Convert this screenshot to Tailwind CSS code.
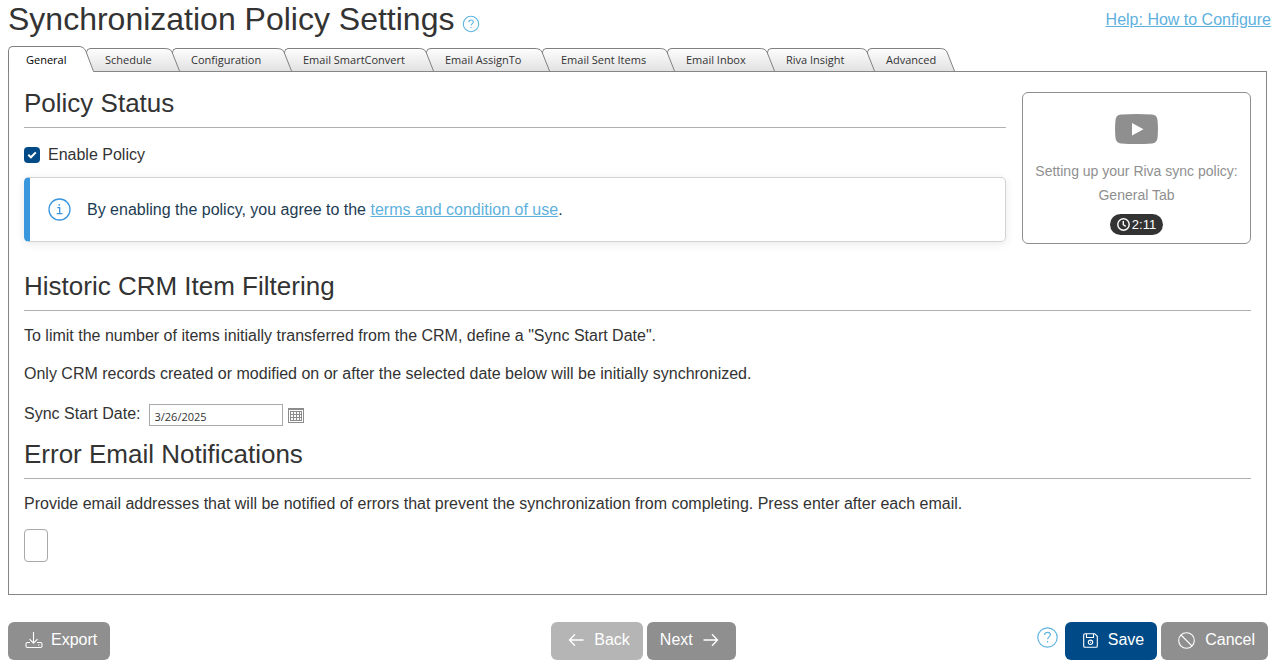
<!DOCTYPE html>
<html lang="en">
<head>
    <meta charset="UTF-8">
    <meta name="viewport" content="width=device-width, initial-scale=1">
    <title>Synchronization Policy Settings</title>
    <script src="https://cdn.jsdelivr.net/npm/@tailwindcss/browser@4"></script>
</head>
<body class="bg-white text-[#333] text-base font-['Liberation_Sans',Arial,sans-serif]">

    <!-- shared tab gradient -->
    <svg class="absolute w-0 h-0" aria-hidden="true">
        <defs>
            <linearGradient id="tabFill" x1="0" y1="0" x2="0" y2="1">
                <stop offset="0" stop-color="#fdfdfd"/>
                <stop offset="1" stop-color="#e2e2e2"/>
            </linearGradient>
        </defs>
    </svg>

    <header class="flex justify-between items-start h-[46px] pl-2 pr-[7px]">
        <div class="flex items-center gap-2">
            <h1 class="text-[32px] leading-[38px]">Synchronization Policy Settings</h1>
            <a href="#" aria-label="Help" class="mt-[10px]">
                <svg class="w-[18px] h-[18px]" viewBox="0 0 18 18" fill="none" stroke="#5eb5e0" stroke-width="1.1">
                    <circle cx="9" cy="9" r="7.7"/>
                    <path d="M6.8 7.2c0-1.4 1-2.2 2.3-2.2s2.2.8 2.2 2c0 1.7-2.2 1.7-2.2 3.6M9.1 11.9v1.2"/>
                </svg>
            </a>
        </div>
        <a href="#" class="mt-2 leading-6 text-[#5eb1de] underline">Help: How to Configure</a>
    </header>

    <main class="ml-2 mr-[11px]">
        <!-- tabs -->
        <div role="tablist" class="flex items-end h-[26px] font-['Open_Sans','Noto_Sans',sans-serif] text-[11px] leading-[22px] whitespace-nowrap">
            <button role="tab" aria-selected="true" class="relative z-10 flex w-[78px] h-[26px] text-black text-left">
                <span class="flex-1 w-0 h-full pl-[17px] pt-[2px] bg-white border-t border-l border-[#808080] rounded-tl-[5px]">General</span>
                <svg class="shrink-0 w-4 h-[26px] -mr-2" viewBox="0 0 16 26"><path d="M0 .5H1C4 .5 6.500 2 8 5.500L15.500 25.500V26H0Z" fill="#fff"/><path d="M0 .5H1C4 .5 6.500 2 8 5.500L15.500 25.500" fill="none" stroke="#808080"/></svg>
            </button>
            <button role="tab" class="relative z-9 flex w-[86px] h-[23px] mb-px text-left">
                <span class="flex-1 w-0 h-full pl-[18px] bg-linear-to-b from-[#fdfdfd] to-[#e2e2e2] border-t border-l border-[#808080] rounded-tl-[5px]">Schedule</span>
                <svg class="shrink-0 w-4 h-[23px] -mr-2" viewBox="0 0 16 23"><path d="M0 .5C4 .5 6.500 1 8 4L15.500 23H0Z" fill="url(#tabFill)"/><path d="M0 .5C4 .5 6.500 1 8 4L15.500 23" fill="none" stroke="#808080"/></svg>
            </button>
            <button role="tab" class="relative z-8 flex w-[112px] h-[23px] mb-px text-left">
                <span class="flex-1 w-0 h-full pl-[18px] bg-linear-to-b from-[#fdfdfd] to-[#e2e2e2] border-t border-l border-[#808080] rounded-tl-[5px]">Configuration</span>
                <svg class="shrink-0 w-4 h-[23px] -mr-2" viewBox="0 0 16 23"><path d="M0 .5C4 .5 6.500 1 8 4L15.500 23H0Z" fill="url(#tabFill)"/><path d="M0 .5C4 .5 6.500 1 8 4L15.500 23" fill="none" stroke="#808080"/></svg>
            </button>
            <button role="tab" class="relative z-7 flex w-[142px] h-[23px] mb-px text-left">
                <span class="flex-1 w-0 h-full pl-[18px] bg-linear-to-b from-[#fdfdfd] to-[#e2e2e2] border-t border-l border-[#808080] rounded-tl-[5px]">Email SmartConvert</span>
                <svg class="shrink-0 w-4 h-[23px] -mr-2" viewBox="0 0 16 23"><path d="M0 .5C4 .5 6.500 1 8 4L15.500 23H0Z" fill="url(#tabFill)"/><path d="M0 .5C4 .5 6.500 1 8 4L15.500 23" fill="none" stroke="#808080"/></svg>
            </button>
            <button role="tab" class="relative z-6 flex w-[116px] h-[23px] mb-px text-left">
                <span class="flex-1 w-0 h-full pl-[18px] bg-linear-to-b from-[#fdfdfd] to-[#e2e2e2] border-t border-l border-[#808080] rounded-tl-[5px]">Email AssignTo</span>
                <svg class="shrink-0 w-4 h-[23px] -mr-2" viewBox="0 0 16 23"><path d="M0 .5C4 .5 6.500 1 8 4L15.500 23H0Z" fill="url(#tabFill)"/><path d="M0 .5C4 .5 6.500 1 8 4L15.500 23" fill="none" stroke="#808080"/></svg>
            </button>
            <button role="tab" class="relative z-5 flex w-[125px] h-[23px] mb-px text-left">
                <span class="flex-1 w-0 h-full pl-[18px] bg-linear-to-b from-[#fdfdfd] to-[#e2e2e2] border-t border-l border-[#808080] rounded-tl-[5px]">Email Sent Items</span>
                <svg class="shrink-0 w-4 h-[23px] -mr-2" viewBox="0 0 16 23"><path d="M0 .5C4 .5 6.500 1 8 4L15.500 23H0Z" fill="url(#tabFill)"/><path d="M0 .5C4 .5 6.500 1 8 4L15.500 23" fill="none" stroke="#808080"/></svg>
            </button>
            <button role="tab" class="relative z-4 flex w-[100px] h-[23px] mb-px text-left">
                <span class="flex-1 w-0 h-full pl-[18px] bg-linear-to-b from-[#fdfdfd] to-[#e2e2e2] border-t border-l border-[#808080] rounded-tl-[5px]">Email Inbox</span>
                <svg class="shrink-0 w-4 h-[23px] -mr-2" viewBox="0 0 16 23"><path d="M0 .5C4 .5 6.500 1 8 4L15.500 23H0Z" fill="url(#tabFill)"/><path d="M0 .5C4 .5 6.500 1 8 4L15.500 23" fill="none" stroke="#808080"/></svg>
            </button>
            <button role="tab" class="relative z-3 flex w-[100px] h-[23px] mb-px text-left">
                <span class="flex-1 w-0 h-full pl-[18px] bg-linear-to-b from-[#fdfdfd] to-[#e2e2e2] border-t border-l border-[#808080] rounded-tl-[5px]">Riva Insight</span>
                <svg class="shrink-0 w-4 h-[23px] -mr-2" viewBox="0 0 16 23"><path d="M0 .5C4 .5 6.500 1 8 4L15.500 23H0Z" fill="url(#tabFill)"/><path d="M0 .5C4 .5 6.500 1 8 4L15.500 23" fill="none" stroke="#808080"/></svg>
            </button>
            <button role="tab" class="relative z-2 flex w-20 h-[23px] mb-px text-left">
                <span class="flex-1 w-0 h-full pl-[18px] bg-linear-to-b from-[#fdfdfd] to-[#e2e2e2] border-t border-l border-[#808080] rounded-tl-[5px]">Advanced</span>
                <svg class="shrink-0 w-4 h-[23px] -mr-2" viewBox="0 0 16 23"><path d="M0 .5C4 .5 6.500 1 8 4L15.500 23H0Z" fill="url(#tabFill)"/><path d="M0 .5C4 .5 6.500 1 8 4L15.500 23" fill="none" stroke="#808080"/></svg>
            </button>
        </div>

        <div role="tabpanel" class="-mt-px border border-[#868686] px-[15px] pt-[15px] pb-8">
            <div class="flex gap-4">
                <section class="flex-1">
                    <h2 class="text-[26px] leading-8 pb-2 border-b border-[#b0b0b0]">Policy Status</h2>
                    <label class="flex items-center gap-2 mt-[15px] leading-6">
                        <span class="relative w-4 h-4">
                            <input type="checkbox" checked class="block appearance-none w-4 h-4 rounded-[4px] bg-[#004b87]">
                            <svg class="absolute inset-0 w-4 h-4 pointer-events-none" viewBox="0 0 16 16" fill="none" stroke="#fff" stroke-width="2"><path d="M4.300 7.700l2.600 2.600 4.900-4.900"/></svg>
                        </span>
                        Enable Policy
                    </label>
                    <div class="flex items-center h-[65px] mt-[10px] border border-l-[6px] border-[#d3d3d3] border-l-[#3a96dd] rounded-[5px] pl-[18px] text-[#1d3c53] shadow-[0_2px_10px_rgba(0,0,0,0.09)]">
                        <svg class="w-[23px] h-[23px] mr-4" viewBox="0 0 23 23" fill="none" stroke="#3a96dd" stroke-width="1.300">
                            <circle cx="11.500" cy="11.500" r="10.500"/>
                            <path d="M9.300 9.600h2.400v5.900M8.700 15.600h5.700M11.200 6v1.700"/>
                        </svg>
                        <p>By enabling the policy, you agree to the <a href="#" class="text-[#5eb1de] underline">terms and condition of use</a>.</p>
                    </div>
                </section>
                <a href="#" class="flex flex-col items-center w-[229px] h-[152px] mt-[5px] border border-[#8f8f8f] rounded-[6px] text-sm leading-6 text-[#8f8f8f] text-center">
                    <svg class="w-[43px] h-[30px] mt-[21px] mb-[15px]" viewBox="0 0 43 30">
                        <path d="M6 .6Q21.500-.6 37 .6Q42 1 42.500 6Q43.400 15 42.500 24Q42 29 37 29.400Q21.500 30.600 6 29.400Q1 29 .5 24Q-.4 15 .5 6Q1 1 6 .6Z" fill="#8f8f8f"/>
                        <path d="M17 9v12.500L28.500 15.200z" fill="#fff"/>
                    </svg>
                    <span>Setting up your Riva sync policy:<br>General Tab</span>
                    <span class="flex items-center gap-[2px] h-[21px] mt-[7px] px-[7px] rounded-full bg-[#333] text-white text-[13px]">
                        <svg class="w-[13px] h-[13px]" viewBox="0 0 13 13" fill="none" stroke="#fff" stroke-width="1.400"><circle cx="6.500" cy="6.500" r="5.700"/><path d="M6.300 3v3.700l2.400 1.700"/></svg>
                        2:11
                    </span>
                </a>
            </div>

            <section class="mt-[26px]">
                <h2 class="text-[26px] leading-8 pb-2 border-b border-[#b0b0b0]">Historic CRM Item Filtering</h2>
                <p class="mt-[13px] leading-6">To limit the number of items initially transferred from the CRM, define a "Sync Start Date".</p>
                <p class="mt-[14px] leading-6">Only CRM records created or modified on or after the selected date below will be initially synchronized.</p>
                <div class="flex items-center mt-[15px]">
                    <label for="startDate" class="leading-6 mr-2">Sync Start Date:</label>
                    <input id="startDate" type="text" value="3/26/2025" class="w-[134px] h-[22px] mt-[3px] border border-[#a9a9a9] pl-[5px] pt-[2px] font-['Open_Sans','Noto_Sans',sans-serif] text-[11px]">
                    <button aria-label="Open the calendar" class="mt-1 ml-[5px]">
                        <svg class="w-4 h-[15px]" viewBox="0 0 16 15" shape-rendering="crispEdges">
                            <path d="M0 0h16v15H0z" fill="#8c8c8c"/>
                            <path d="M1 2h14v12H1z" fill="#fff"/>
                            <path d="M2 3h12v10H2z" fill="#8c8c8c"/>
                            <path d="M3 4h2v2H3zM6 4h2v2H6zM9 4h2v2H9zM12 4h1v2h-1zM3 7h2v2H3zM6 7h2v2H6zM9 7h2v2H9zM12 7h1v2h-1zM3 10h2v2H3zM6 10h2v2H6zM9 10h2v2H9zM12 10h1v2h-1z" fill="#fff"/>
                        </svg>
                    </button>
                </div>
            </section>

            <section class="mt-[12px]">
                <h2 class="text-[26px] leading-8 pb-2 border-b border-[#b0b0b0]">Error Email Notifications</h2>
                <p class="mt-[13px] leading-6"><label for="emails">Provide email addresses that will be notified of errors that prevent the synchronization from completing. Press enter after each email.</label></p>
                <input id="emails" type="text" class="block w-6 h-[33px] mt-[13px] border border-[#a9a9a9] rounded-[4px]">
            </section>
        </div>
    </main>

    <footer class="grid grid-cols-[1fr_auto_1fr] items-center mt-[27px] ml-2 mr-[10px] leading-6">
        <div>
            <button class="flex items-center gap-2 h-[38px] pl-[17px] pr-[13px] pb-[2px] rounded-[6px] bg-[#8f8f8f] text-white">
                <svg class="w-[18px] h-[18px]" viewBox="0 0 18 18" fill="none" stroke="#fff" stroke-width="1.100"><path d="M8.500 1v11M4.500 8.200l4 4 4-4M5 11.500H2.500Q1 11.500 1 13v2Q1 16.500 2.500 16.500h13Q17 16.500 17 15v-2Q17 11.500 15.500 11.500H12M13 14h1.500"/></svg>
                Export
            </button>
        </div>
        <div class="flex gap-1 pl-[11px]">
            <button disabled class="flex items-center gap-[10px] h-[38px] pl-[17px] pr-[13px] pb-[2px] rounded-[6px] bg-[#b5b5b5] text-white">
                <svg class="w-4 h-4" viewBox="0 0 16 16" fill="none" stroke="#fff" stroke-width="1.300"><path d="M15.500 8H1.500M7 2.300L1.500 8l5.500 5.700"/></svg>
                Back
            </button>
            <button class="flex items-center gap-[10px] h-[38px] pl-[13px] pr-[17px] pb-[2px] rounded-[6px] bg-[#8f8f8f] text-white">
                Next
                <svg class="w-4 h-4" viewBox="0 0 16 16" fill="none" stroke="#fff" stroke-width="1.300"><path d="M.5 8h14M9 2.300L14.500 8 9 13.700"/></svg>
            </button>
        </div>
        <div class="flex items-center justify-end gap-1">
            <a href="#" aria-label="Help" class="mr-[3px] mb-[8px]">
                <svg class="w-[21px] h-[21px]" viewBox="0 0 21 21" fill="none" stroke="#5eb5e0" stroke-width="1.200"><circle cx="10.500" cy="10.500" r="9.700"/><path d="M7.600 8c0-1.800 1.300-2.700 2.900-2.700s2.900 1 2.900 2.400c0 2.200-2.800 2.200-2.800 4.600M10.600 14v1.500"/></svg>
            </a>
            <button class="flex items-center gap-[10px] h-[38px] pl-[18px] pr-[13px] pb-[2px] rounded-[6px] bg-[#004b87] text-white">
                <svg class="w-[15px] h-[15px]" viewBox="0 0 15 15" fill="none" stroke="#fff" stroke-width="1.100"><path d="M2 .7h9.700l2.600 2.600v9.700q0 1.300-1.300 1.300H2Q.7 14.300.7 13V2Q.7.700 2 .7zM3.500.700v3.800h7V.700"/><circle cx="7.500" cy="9.300" r="2.200"/><path d="M7 9.300h1"/></svg>
                Save
            </button>
            <button class="flex items-center gap-[10px] h-[38px] pl-[17px] pr-[13px] pb-[2px] rounded-[6px] bg-[#8f8f8f] text-white">
                <svg class="w-[17px] h-[17px]" viewBox="0 0 17 17" fill="none" stroke="#fff" stroke-width="1.100"><circle cx="8.500" cy="8.500" r="7.800"/><path d="M3 3l11 11"/></svg>
                Cancel
            </button>
        </div>
    </footer>

</body>
</html>
